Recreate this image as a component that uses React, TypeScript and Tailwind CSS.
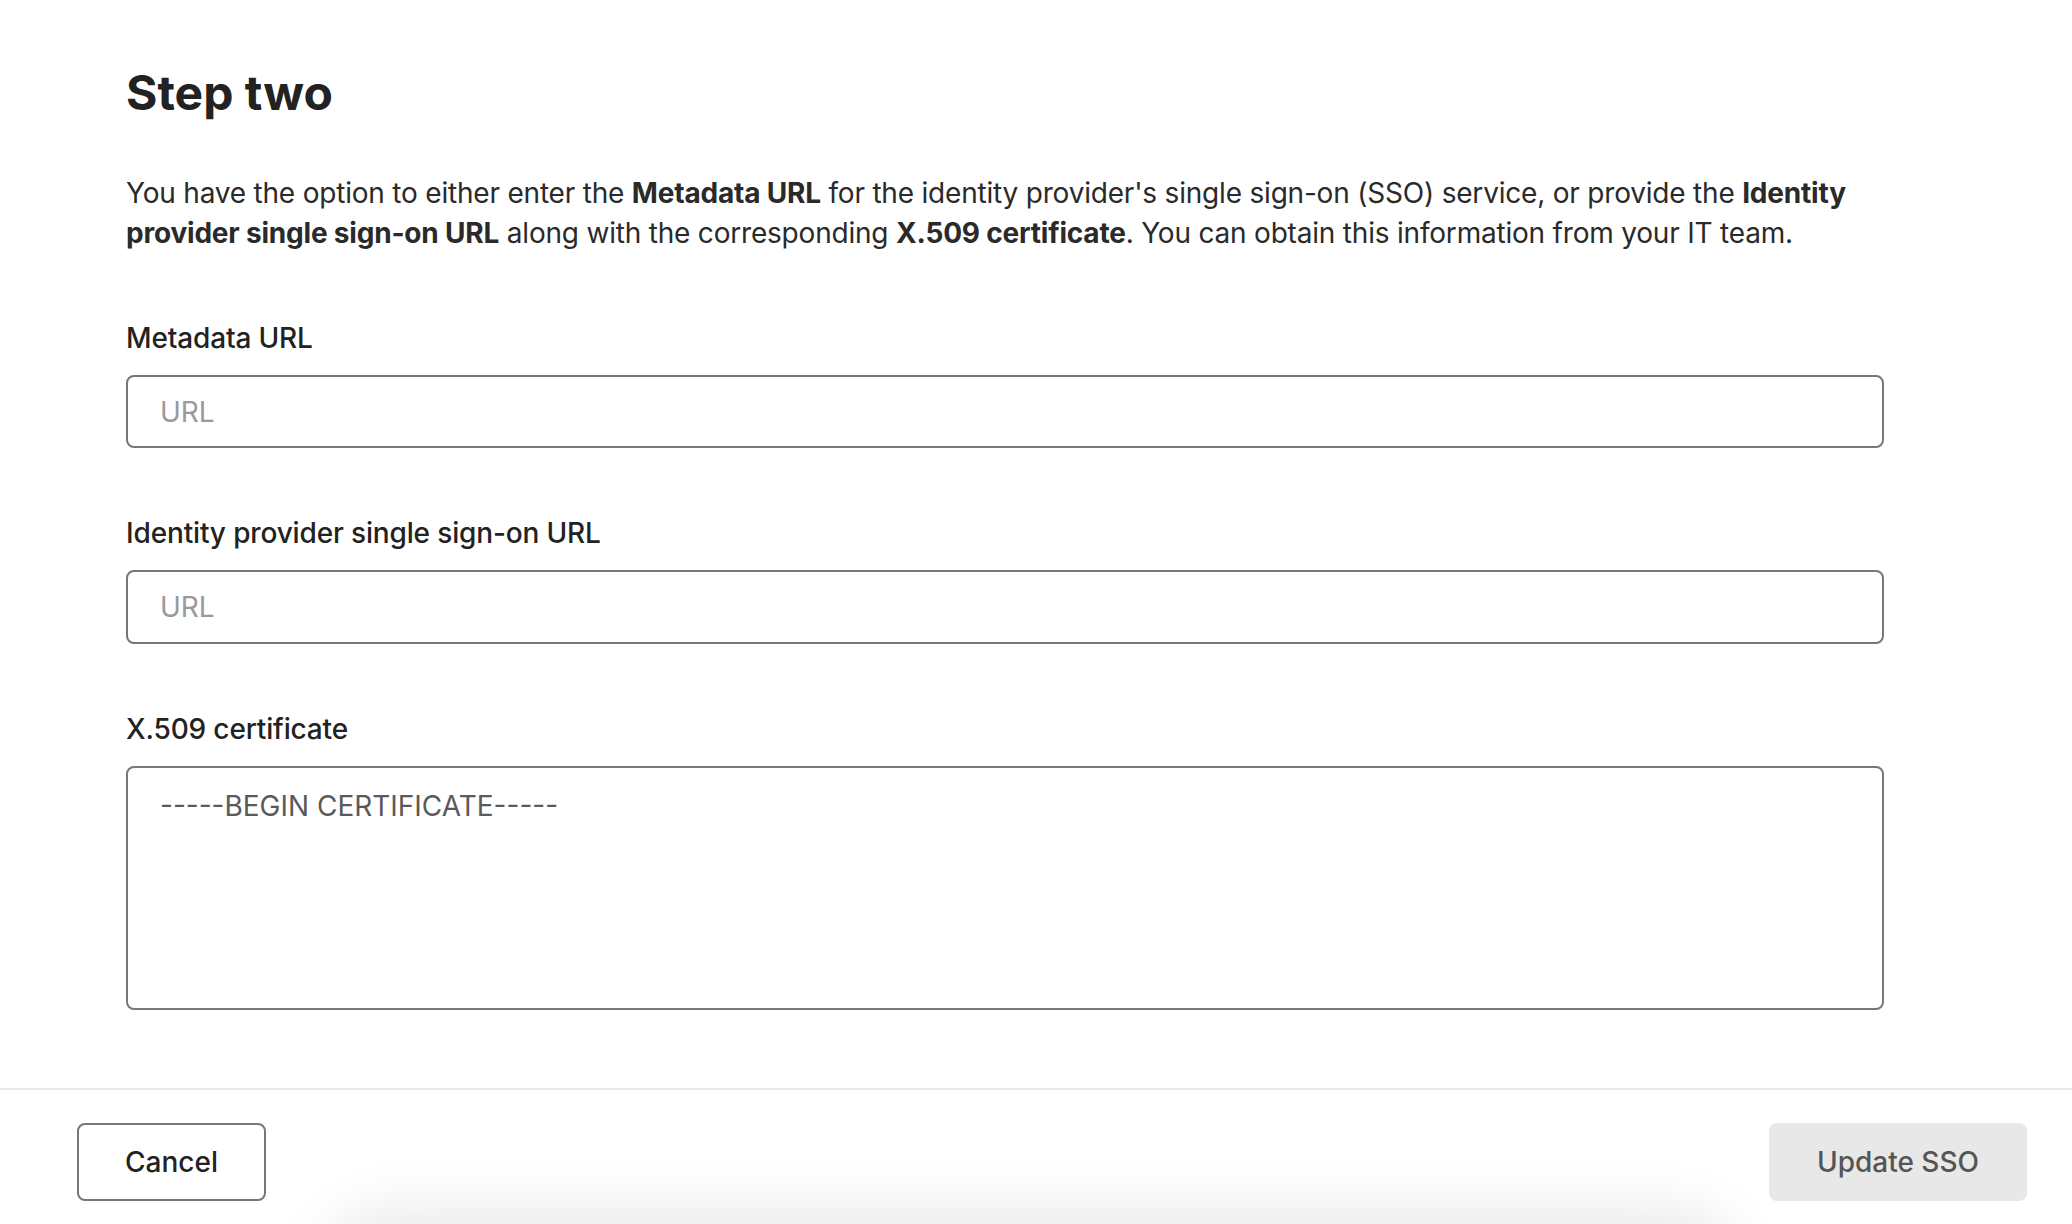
import React from "react";

const font = { fontFamily: "Inter, 'Noto Sans', sans-serif" };

function Field({ label, children }: { label: string; children: React.ReactNode }) {
  return (
    <div className="flex flex-col">
      <label className="text-[28px] leading-[40px] font-medium tracking-[-0.15px] text-[#222] mb-[17px]">{label}</label>
      {children}
    </div>
  );
}

export default function App() {
  return (
    <div style={font} className="relative h-[1224px] w-full overflow-hidden bg-white text-[#222]">
      <div className="pl-[126px] pr-[188px] pt-[63px]">
        <h1 className="text-[48px] leading-[60px] font-bold text-[#222]">Step two</h1>

        <p className="mt-[50px] text-[28px] leading-[40px] tracking-[-0.2px] text-[#2a2a2a]">
          You have the option to either enter the <b className="font-bold">Metadata URL</b> for the identity
          provider's single sign-on (SSO) service, or provide the{" "}
          <b className="font-bold">Identity provider single sign-on URL</b> along with the corresponding{" "}
          <b className="font-bold">X.509 certificate</b>. You can obtain this information from your IT team.
        </p>

        <div className="mt-[65px] flex flex-col gap-[65px]">
          <Field label="Metadata URL">
            <input
              placeholder="URL"
              className="h-[73px] w-full rounded-[8px] border-2 border-[#777] px-[32px] text-[28px] text-[#222] placeholder:text-[#9a9a9a] outline-none"
            />
          </Field>
          <Field label="Identity provider single sign-on URL">
            <input
              placeholder="URL"
              className="h-[74px] w-full rounded-[8px] border-2 border-[#777] px-[32px] text-[28px] text-[#222] placeholder:text-[#9a9a9a] outline-none"
            />
          </Field>
          <Field label="X.509 certificate">
            <textarea
              placeholder="-----BEGIN CERTIFICATE-----"
              className="h-[244px] w-full resize-none rounded-[8px] border-2 border-[#777] px-[32px] py-[18px] text-[28px] leading-[40px] text-[#222] placeholder:text-[#5a5a5a] outline-none"
            />
          </Field>
        </div>
      </div>

      <div className="absolute left-0 right-0 top-[1088px] border-t-2 border-[#e8e8e8]">
        <div className="flex items-center justify-between pl-[77px] pr-[45px] pt-[33px]">
          <button className="h-[78px] rounded-[8px] border-2 border-[#777] bg-white px-[46px] text-[28px] font-medium text-[#222]">
            Cancel
          </button>
          <button className="h-[78px] rounded-[8px] bg-[#e8e8e8] px-[48px] text-[28px] font-medium text-[#555]">
            Update SSO
          </button>
        </div>
      </div>

      {/* shadow of the sheet peeking from below */}
      <div className="pointer-events-none absolute left-[350px] top-[1240px] h-[80px] w-[1360px] rounded-[40px] bg-white shadow-[0_0_60px_30px_rgba(0,0,0,0.09)]" />
    </div>
  );
}
